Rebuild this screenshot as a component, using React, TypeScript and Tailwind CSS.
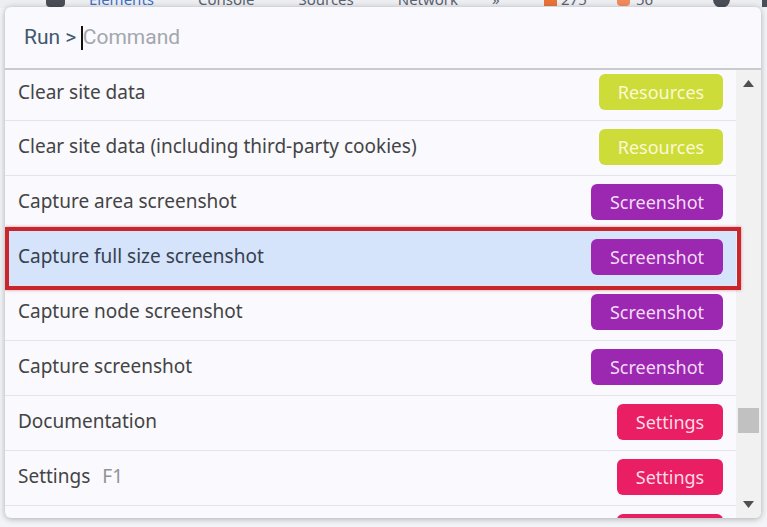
import React from "react";

type Tag = "Resources" | "Screenshot" | "Settings";

const tagStyles: Record<Tag, string> = {
  Resources: "w-[124px] bg-[#cddc39] text-[#fbf9d2]",
  Screenshot: "w-[132px] bg-[#9c27b0] text-[#f4dcf8]",
  Settings: "w-[106px] bg-[#e91e63] text-[#fcdbe6]",
};

const commands: { label: string; shortcut?: string; tag: Tag; selected?: boolean }[] = [
  { label: "Clear site data", tag: "Resources" },
  { label: "Clear site data (including third-party cookies)", tag: "Resources" },
  { label: "Capture area screenshot", tag: "Screenshot" },
  { label: "Capture full size screenshot", tag: "Screenshot", selected: true },
  { label: "Capture node screenshot", tag: "Screenshot" },
  { label: "Capture screenshot", tag: "Screenshot" },
  { label: "Documentation", tag: "Settings" },
  { label: "Settings", shortcut: "F1", tag: "Settings" },
  { label: "Shortcuts", tag: "Settings" },
];

function DevtoolsBackdrop() {
  return (
    <div className="h-[8px] overflow-hidden bg-[#eceef1]">
      <div className="flex items-center -mt-[12px] text-[15px] text-[#5a6170] font-['Noto_Sans',sans-serif]">
        <span className="ml-[46px] w-[20px] h-[16px] bg-[#4a4f57] rounded-sm" />
        <span className="ml-[24px] text-[#3d6fc4]">Elements</span>
        <span className="ml-[44px]">Console</span>
        <span className="ml-[44px]">Sources</span>
        <span className="ml-[44px]">Network</span>
        <span className="ml-[34px]">»</span>
        <span className="ml-[44px] w-[14px] h-[14px] bg-[#e8733a]" />
        <span className="ml-[4px]">275</span>
        <span className="ml-[30px] w-[14px] h-[14px] bg-[#f08a5d] rounded-sm" />
        <span className="ml-[6px]">56</span>
        <span className="ml-[60px] w-[18px] h-[18px] rounded-full bg-[#4a4f57]" />
        <span className="ml-[32px] w-[5px] h-[16px] bg-[#4a4f57]" />
      </div>
    </div>
  );
}

function Badge({ tag }: { tag: Tag }) {
  return (
    <span
      className={`flex h-[36px] shrink-0 items-center justify-center rounded-[6px] text-[18px] leading-none ${tagStyles[tag]}`}
    >
      {tag}
    </span>
  );
}

export default function App() {
  return (
    <div className="relative h-[527px] w-[767px] overflow-hidden bg-[#f3f4f7] font-['Noto_Sans',sans-serif]">
      <DevtoolsBackdrop />

      <div className="absolute left-[5px] top-[7px] flex h-[511px] w-[756px] flex-col overflow-hidden rounded-[6px] bg-[#f9f9fe] shadow-[0_1px_6px_rgba(0,0,0,0.3)]">
        <div className="flex h-[61px] shrink-0 items-center pl-[19px] pt-[1px] font-['Roboto',sans-serif] text-[21px]">
          <span className="text-[#41586f]">Run &gt;</span>
          <span className="ml-[5px] h-[24px] w-[1.5px] bg-[#111]" />
          <span className="text-[#a3a7ad]">Command</span>
        </div>
        <div className="h-[2px] shrink-0 bg-[#c9cbcf]" />

        <div className="flex min-h-0 flex-1">
          <div className="flex-1 overflow-hidden">
            {commands.map((c, i) => (
              <div
                key={c.label}
                className={`flex items-center justify-between border-b border-[#e3e3ea] pl-[13px] pr-[13px] ${
                  i === 0 ? "h-[51px] pb-[6px]" : "h-[55px] pb-[3px]"
                } ${c.selected ? "bg-[#d5e3fb] text-[#36404f]" : "text-[#444444]"}`}
              >
                <span className="text-[19px]">
                  {c.label}
                  {c.shortcut ? <span className="ml-[12px] text-[#929292]">{c.shortcut}</span> : null}
                </span>
                <Badge tag={c.tag} />
              </div>
            ))}
          </div>

          <div className="flex w-[25px] shrink-0 flex-col bg-[#f1f1f1]">
            <div className="flex h-[26px] items-center justify-center">
              <svg width="11" height="7" viewBox="0 0 11 7">
                <path d="M5.5 0L11 7H0z" fill="#505050" />
              </svg>
            </div>
            <div className="flex-1 px-[2px]">
              <div className="mt-[312px] h-[25px] bg-[#c1c1c1]" />
            </div>
            <div className="flex h-[24px] items-start justify-center pt-[7px]">
              <svg width="11" height="7" viewBox="0 0 11 7">
                <path d="M0 0H11L5.5 7z" fill="#505050" />
              </svg>
            </div>
          </div>
        </div>

        <div className="pointer-events-none absolute left-0 top-[220px] h-[63px] w-[736px] border-[4px] border-[#c9252c] shadow-[0_0_3px_rgba(201,37,44,0.5)]" />
      </div>
    </div>
  );
}
